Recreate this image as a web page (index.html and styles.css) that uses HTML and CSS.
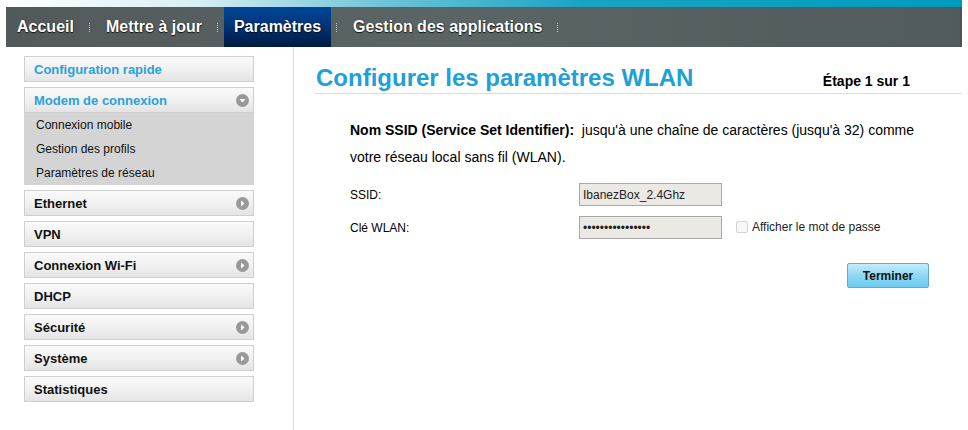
FILE: index.html
```html
<!DOCTYPE html>
<html lang="fr">
<head>
<meta charset="utf-8">
<title>Configurer les paramètres WLAN</title>
<link rel="stylesheet" href="styles.css">
</head>
<body>
<div class="header">
  <div class="strip"></div>
  <nav class="nav">
    <a class="nav-item first">Accueil</a><span class="sep"></span>
    <a class="nav-item">Mettre à jour</a><span class="sep"></span>
    <a class="nav-item active">Paramètres</a><span class="sep"></span>
    <a class="nav-item">Gestion des applications</a><span class="sep"></span>
  </nav>
</div>
<div class="main">
  <aside class="sidebar">
    <div class="menu-item blue">Configuration rapide</div>
    <div class="group">
      <div class="menu-item blue open">Modem de connexion
        <svg class="ico" width="13" height="13" viewBox="0 0 13 13"><circle cx="6.5" cy="6.5" r="6.5" fill="#999"/><path d="M3.5 5 L9.5 5 L6.5 8.5 Z" fill="#fff"/></svg>
      </div>
      <div class="sub">
        <div class="sub-item">Connexion mobile</div>
        <div class="sub-item">Gestion des profils</div>
        <div class="sub-item">Paramètres de réseau</div>
      </div>
    </div>
    <div class="menu-item">Ethernet
      <svg class="ico" width="13" height="13" viewBox="0 0 13 13"><circle cx="6.5" cy="6.5" r="6.5" fill="#999"/><path d="M5 3.5 L8.5 6.5 L5 9.5 Z" fill="#fff"/></svg>
    </div>
    <div class="menu-item">VPN</div>
    <div class="menu-item">Connexion Wi-Fi
      <svg class="ico" width="13" height="13" viewBox="0 0 13 13"><circle cx="6.5" cy="6.5" r="6.5" fill="#999"/><path d="M5 3.5 L8.5 6.5 L5 9.5 Z" fill="#fff"/></svg>
    </div>
    <div class="menu-item">DHCP</div>
    <div class="menu-item">Sécurité
      <svg class="ico" width="13" height="13" viewBox="0 0 13 13"><circle cx="6.5" cy="6.5" r="6.5" fill="#999"/><path d="M5 3.5 L8.5 6.5 L5 9.5 Z" fill="#fff"/></svg>
    </div>
    <div class="menu-item">Système
      <svg class="ico" width="13" height="13" viewBox="0 0 13 13"><circle cx="6.5" cy="6.5" r="6.5" fill="#999"/><path d="M5 3.5 L8.5 6.5 L5 9.5 Z" fill="#fff"/></svg>
    </div>
    <div class="menu-item">Statistiques</div>
  </aside>
  <section class="content">
    <div class="title-row">
      <h1 class="title">Configurer les paramètres WLAN</h1>
      <span class="step">Étape 1 sur 1</span>
    </div>
    <p class="desc"><b>Nom SSID (Service Set Identifier):</b>&nbsp; jusqu'à une chaîne de caractères (jusqu'à 32) comme votre réseau local sans fil (WLAN).</p>
    <div class="form-row">
      <label class="label">SSID:</label>
      <input class="field" type="text" value="IbanezBox_2.4Ghz">
    </div>
    <div class="form-row">
      <label class="label">Clé WLAN:</label>
      <input class="field" type="password" value="abcdefghijklmnop">
      <label class="show"><input type="checkbox" class="chk" disabled> Afficher le mot de passe</label>
    </div>
    <div class="actions">
      <button class="btn">Terminer</button>
    </div>
  </section>
</div>
</body>
</html>
```
FILE: styles.css
```css
* { box-sizing: border-box; }
html, body { margin: 0; padding: 0; background: #fff; }
body { font-family: "Liberation Sans", Arial, sans-serif; color: #000; width: 968px; height: 430px; overflow: hidden; }

.header { margin: 0 6px; width: 956px; }
.strip { height: 7px; background: linear-gradient(to right, #ffffff 0%, #d8eef4 20%, #6cc3d6 40%, #1aa4c4 60%, #009bbd 100%); }
.nav {
  height: 40px; display: flex; align-items: center;
  background: linear-gradient(to right, #52595b 0%, #5b6566 45%, #515a5c 100%);
  box-shadow: inset -2px 0 1px rgba(0,0,0,0.08);
}
.nav-item {
  height: 40px; display: flex; align-items: center; padding: 0 10px;
  color: #fff; font-weight: bold; font-size: 16px;
  text-shadow: 0 1px 1px rgba(0,0,0,0.8), 1px 0 1px rgba(0,0,0,0.4);
}
.nav-item.first { padding-left: 11px; }
.nav-item.active { background: linear-gradient(to bottom, #00479a 0%, #003070 55%, #001a40 100%); }
.sep { width: 1px; height: 9px; border-left: 1px dotted #bfc4c5; margin: 0 6px 0 5px; }

.main { display: flex; height: 383px; }
.sidebar { width: 293px; padding: 9px 0 0 24px; display: flex; flex-direction: column; gap: 5px; }
.group { display: flex; flex-direction: column; width: 230px; }
.menu-item {
  width: 230px; height: 26px; display: flex; align-items: center; justify-content: space-between;
  padding: 0 4px 0 9px; border: 1px solid #cfcfcf;
  background: linear-gradient(to bottom, #fafafa 0%, #f1f1f1 50%, #e4e4e4 100%);
  font-size: 13px; font-weight: bold; color: #111;
}
.menu-item.blue { color: #2aa1d8; }
.ico { flex: none; }
.sub { background: #d4d4d4; padding: 0 0 0 12px; }
.sub-item { height: 24px; line-height: 25px; font-size: 12px; color: #111; }

.content { flex: 1; border-left: 1px solid #dedede; padding: 0 0 0 20px; margin-right: 6px; }
.title-row {
  display: flex; justify-content: space-between; align-items: baseline;
  margin: 0; padding: 18px 52px 0 0; border-bottom: 1px solid #dcdcdc;
  height: 47px;
}
.title { margin: 0; font-size: 24px; font-weight: bold; color: #20a0d8; padding-left: 2px; line-height: 26px; }
.step { font-size: 14px; font-weight: bold; }
.desc { margin: 23px 44px 0 36px; font-size: 14px; line-height: 27px; }
.form-row { display: flex; align-items: center; margin: 12px 0 0 36px; height: 23px; }
.form-row + .form-row { margin-top: 10px; }
.label { width: 229px; font-size: 12px; }
.field {
  width: 143px; height: 23px; border: 1px solid #a8a8a8; background: #ebe9e3;
  font-family: "Liberation Sans", Arial, sans-serif; font-size: 12px; padding: 0 3px; color: #222;
  border-radius: 0; outline: none;
}
.show { display: flex; align-items: center; margin-left: 14px; font-size: 12px; color: #222; margin-top: -2px; }
.chk { width: 12px; height: 12px; margin: 0 4px 0 0; }
.actions { display: flex; justify-content: flex-end; padding-right: 33px; margin-top: 24px; }
.btn {
  width: 82px; height: 25px; border: 1px solid #6aa7c0; border-radius: 2px;
  background: linear-gradient(to bottom, #c6ecfb 0%, #8ed8f5 50%, #6ccbf0 100%);
  font-family: "Liberation Sans", Arial, sans-serif; font-size: 12px; font-weight: bold; color: #111;
}
```
